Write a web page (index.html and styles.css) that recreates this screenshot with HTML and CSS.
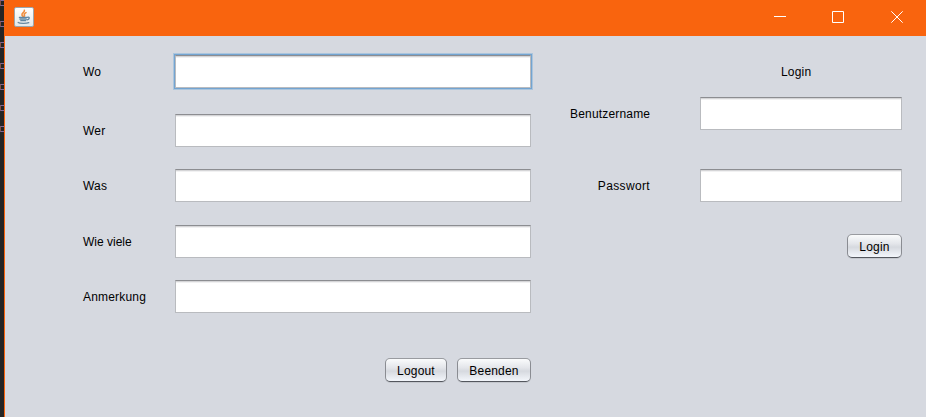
FILE: index.html
```
<!DOCTYPE html>
<html lang="de">
<head>
<meta charset="utf-8">
<title>Login</title>
<link rel="stylesheet" href="styles.css">
</head>
<body>
<div class="backdrop">
  <i></i><i></i><i></i><i></i><i></i><i></i><i></i>
</div>
<div class="window">
  <header class="titlebar">
    <svg class="app-icon" width="20" height="20" viewBox="0 0 20 20">
      <defs><linearGradient id="tile" x1="0" y1="0" x2="0" y2="1"><stop offset="0" stop-color="#fff"/><stop offset="1" stop-color="#e2e7e9"/></linearGradient></defs>
      <rect x=".5" y=".5" width="19" height="19" rx="1.5" fill="url(#tile)" stroke="#9ba6ae"/>
      <g fill="none" stroke-linecap="round">
        <path d="M10.4 3.2C11 5.2 7.2 6.2 8 8.2C8.2 8.8 9 9.3 9.3 9.8M12 5.6C9.5 6.9 10.2 7.6 10.5 8.4C10.7 9 10 9.6 9.8 9.8" stroke="#ef8d3e" stroke-width="1.6"/>
        <path d="M5.4 10.5H12.6M6 12.2H12.2M6.8 13.7H11.6M13.3 10.3C16.2 9.6 15.6 12.4 13.2 12.8" stroke="#5f86a3" stroke-width="1.3"/>
        <path d="M4.2 15.5C5.5 16.6 12.5 16.6 14.8 15.7" stroke="#6688a2" stroke-width="1.3"/>
      </g>
    </svg>
    <div class="controls">
      <svg width="12" height="12" viewBox="0 0 12 12"><path d="M0 5.5H12"/></svg>
      <svg width="12" height="12" viewBox="0 0 12 12"><path d="M.5 .5H11.5V11.5H.5Z"/></svg>
      <svg width="12" height="12" viewBox="0 0 12 12"><path d="M.3 .3L11.7 11.7M11.7 .3L.3 11.7"/></svg>
    </div>
  </header>
  <main class="content">
    <section class="report">
      <label class="row"><span>Wo</span><input class="field focused" type="text"></label>
      <label class="row"><span>Wer</span><input class="field" type="text"></label>
      <label class="row"><span>Was</span><input class="field" type="text"></label>
      <label class="row"><span class="count">Wie viele</span><input class="field" type="text"></label>
      <label class="row"><span>Anmerkung</span><input class="field" type="text"></label>
      <div class="actions">
        <button class="logout">Logout</button>
        <button class="quit">Beenden</button>
      </div>
    </section>
    <section class="login">
      <h2>Login</h2>
      <label class="row"><span class="user">Benutzername</span><input class="field" type="text"></label>
      <label class="row"><span class="pass">Passwort</span><input class="field" type="password"></label>
      <button class="submit">Login</button>
    </section>
  </main>
</div>
</body>
</html>
```
FILE: styles.css
```
* { box-sizing: border-box; }
body {
  margin: 0;
  width: 926px;
  height: 417px;
  display: flex;
  overflow: hidden;
  font: 12px/16px "Liberation Sans", Arial, sans-serif;
  color: #000;
}
.backdrop {
  width: 4px;
  flex: none;
  background: #252525;
  display: flex;
  flex-direction: column;
  gap: 15px;
  overflow: hidden;
}
.backdrop i {
  width: 4px;
  height: 6px;
  flex: none;
  border: 1px solid #80699b;
  border-left-color: #875044;
  border-right: 0;
}
.window {
  flex: 1;
  display: flex;
  flex-direction: column;
  border-left: 1px solid #f9640e;
  background: #d6d9e0;
}
.titlebar {
  height: 36px;
  flex: none;
  display: flex;
  justify-content: space-between;
  padding: 7px 23px 0 9px;
  background: #f9640e;
}
.controls { display: flex; gap: 46px; padding-top: 4px; }
.controls svg { fill: none; stroke: #fff; }
.controls svg:nth-child(3) { margin-left: 1px; }
.content { flex: 1; display: flex; }
.report { width: 526px; padding: 19px 0 0 78px; }
.row { display: flex; align-items: center; height: 33px; }
.report .row { margin-bottom: 22px; }
.report .row:nth-child(1) { margin-bottom: 26px; }
.report .row:nth-child(3) { margin-bottom: 23px; }
.report .row span { width: 92px; }
.row span, h2, button { letter-spacing: .18px; }
.row .count { letter-spacing: 0; }
.row .pass { letter-spacing: .35px; }
.field {
  flex: 1;
  min-width: 0;
  height: 33px;
  padding: 0 6px;
  border: 1px solid #b9bbbf;
  border-top-color: #8c8d91;
  border-radius: 0;
  background: #fff;
  box-shadow: inset 0 1px #d5d5d7, inset 0 2px #f1f1f2;
  font: inherit;
  outline: none;
}
.focused {
  box-shadow: inset 0 1px #d5d5d7, inset 0 2px #f1f1f2, 0 0 0 1px #73a4d1, 0 0 0 2px #abc5dd;
}
.actions { display: flex; justify-content: flex-end; gap: 10px; margin-top: 45px; }
button {
  height: 24px;
  padding: 1px 0 0;
  border: 1px solid #8a8c92;
  border-top-color: #999ba0;
  border-bottom-color: #54575e;
  border-radius: 5px;
  background: linear-gradient(#fafbfc, #e3e5ea 40%, #d6d9df 55%, #f3f6fb);
  box-shadow: 0 1px #c4c7cd;
  font: inherit;
  color: #000;
}
.logout { width: 62px; }
.quit { width: 74px; }
.login { width: 371px; padding: 28px 0 0 39px; }
h2 { margin: 0 0 17px 211px; font-size: 12px; font-weight: 400; line-height: 16px; }
.login .row { width: 332px; }
.login .row span { width: 80px; margin-right: 50px; text-align: right; white-space: nowrap; }
.login .row + .row { margin-top: 39px; }
.submit { display: block; width: 55px; margin: 32px 0 0 277px; }
```
